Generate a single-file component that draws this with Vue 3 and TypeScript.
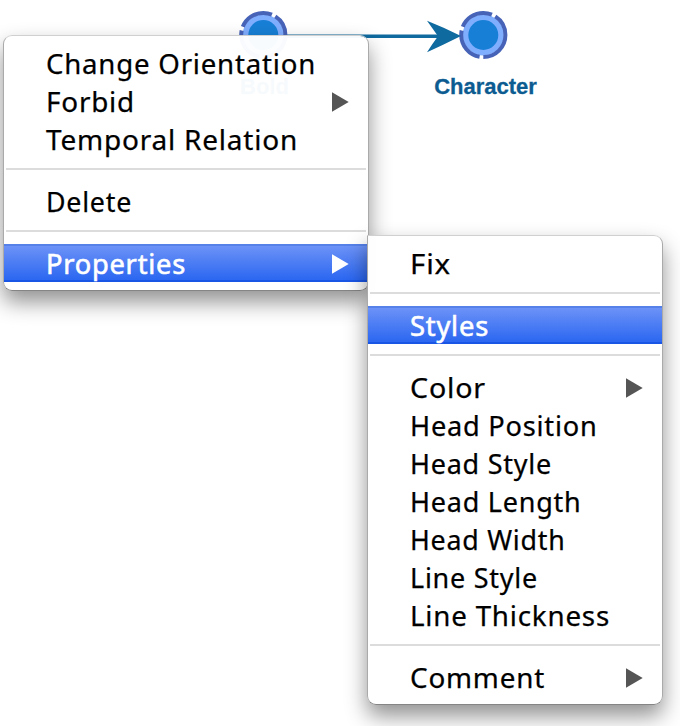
<script setup lang="ts">
interface Entry {
  label?: string
  width?: number
  sub?: boolean
  active?: boolean
}
interface Menu {
  name: string
  entries: Entry[]
}

const menus: Menu[] = [
  {
    name: 'primary',
    entries: [
      { label: 'Change Orientation', width: 270 },
      { label: 'Forbid', width: 89, sub: true },
      { label: 'Temporal Relation', width: 252 },
      {},
      { label: 'Delete', width: 86 },
      {},
      { label: 'Properties', width: 140, sub: true, active: true },
    ],
  },
  {
    name: 'secondary',
    entries: [
      { label: 'Fix', width: 41 },
      {},
      { label: 'Styles', width: 79, active: true },
      {},
      { label: 'Color', width: 76, sub: true },
      { label: 'Head Position', width: 187.5 },
      { label: 'Head Style', width: 142 },
      { label: 'Head Length', width: 171.5 },
      { label: 'Head Width', width: 155.5 },
      { label: 'Line Style', width: 128 },
      { label: 'Line Thickness', width: 200 },
      {},
      { label: 'Comment', width: 135, sub: true },
    ],
  },
]

const nodes = [
  { x: 263.3, label: 'Bold', labelX: 264.5 },
  { x: 483.3, label: 'Character', labelX: 485.5 },
]
</script>

<template>
  <main class="canvas">
    <svg class="graph" width="680" height="110" viewBox="0 0 680 110">
      <path class="edge" d="M263 36.3H442" />
      <g v-for="n in nodes" :key="n.label">
        <circle class="halo" :cx="n.x" cy="35" r="20.6" />
        <circle class="core" :cx="n.x" cy="35" r="15" />
        <circle class="ring" :cx="n.x" cy="35" r="22.1" pathLength="360" />
        <text class="node-label" :x="n.labelX" y="94">{{ n.label }}</text>
      </g>
      <path class="head" d="M427 20.7Q443 27 461 36Q443 45 427 52.2Q433 43 438 36.3Q433 29 427 20.7Z" />
    </svg>

    <div v-for="m in menus" :key="m.name" class="menu" :class="m.name" role="menu">
      <template v-for="(e, i) in m.entries" :key="i">
        <div v-if="e.label" class="item" :class="{ active: e.active }" role="menuitem">
          <svg class="caption" height="38" width="280">
            <text x="0" y="30" :textLength="e.width" lengthAdjust="spacingAndGlyphs">{{ e.label }}</text>
          </svg>
          <svg v-if="e.sub" class="arrow" width="17" height="20" viewBox="0 0 17 20">
            <path d="M0 0.2L16.7 10L0 19.8Z" />
          </svg>
        </div>
        <div v-else class="separator" role="separator"></div>
      </template>
    </div>
  </main>
</template>

<style>
body {
  margin: 0;
  background: #fff;
}
</style>

<style scoped>
.canvas {
  position: relative;
  width: 680px;
  height: 726px;
  overflow: hidden;
  background: #fff;
}
.graph {
  display: block;
}
.edge {
  stroke: #0f6a9f;
  stroke-width: 3.4;
}
.head {
  fill: #0f6a9f;
}
.halo {
  fill: #80aefe;
}
.core {
  fill: #177fd5;
}
.ring {
  fill: none;
  stroke: #4763b8;
  stroke-width: 4;
  stroke-dasharray: 90 10 92 10 91 10 57 0;
}
.node-label {
  font: bold 22px 'Liberation Sans', sans-serif;
  fill: #0c5c91;
  stroke: #0c5c91;
  stroke-width: 0.3px;
  text-anchor: middle;
}
.menu {
  position: absolute;
  box-sizing: border-box;
  padding: 8px 0;
  border: 1px solid #aaa;
  border-top-color: #d0d0d0;
  border-bottom-color: #858585;
  background: rgba(255, 255, 255, 0.97);
  background-clip: padding-box;
  box-shadow: 0 11px 21px rgba(0, 0, 0, 0.43);
}
.primary {
  left: 3px;
  top: 35px;
  width: 366px;
  border-radius: 9px;
}
.secondary {
  left: 367px;
  top: 235px;
  width: 296px;
  border-radius: 0 9px 9px 9px;
}
.item {
  display: flex;
  align-items: center;
  justify-content: space-between;
  height: 38px;
  padding: 0 19px 0 42px;
  color: #000;
}
.active {
  color: #fff;
  background: linear-gradient(#5581e9 0 2px, #6c92f7 2px, #2b67f1 36px, #1a56e6 36px);
}
.caption {
  flex: 0 1 280px;
  min-width: 0;
  overflow: visible;
}
.caption text {
  font: 28px 'Noto Sans', sans-serif;
  letter-spacing: 0.8px;
  fill: currentColor;
  stroke: currentColor;
  stroke-width: 0.25px;
}
.active .caption text {
  stroke-width: 0.6px;
}
.arrow {
  flex: none;
  position: relative;
  top: 1px;
  fill: #555;
}
.active .arrow {
  fill: #fff;
}
.separator {
  height: 2px;
  margin: 10px 2px 12px;
  background: #dcdcdc;
}
</style>
